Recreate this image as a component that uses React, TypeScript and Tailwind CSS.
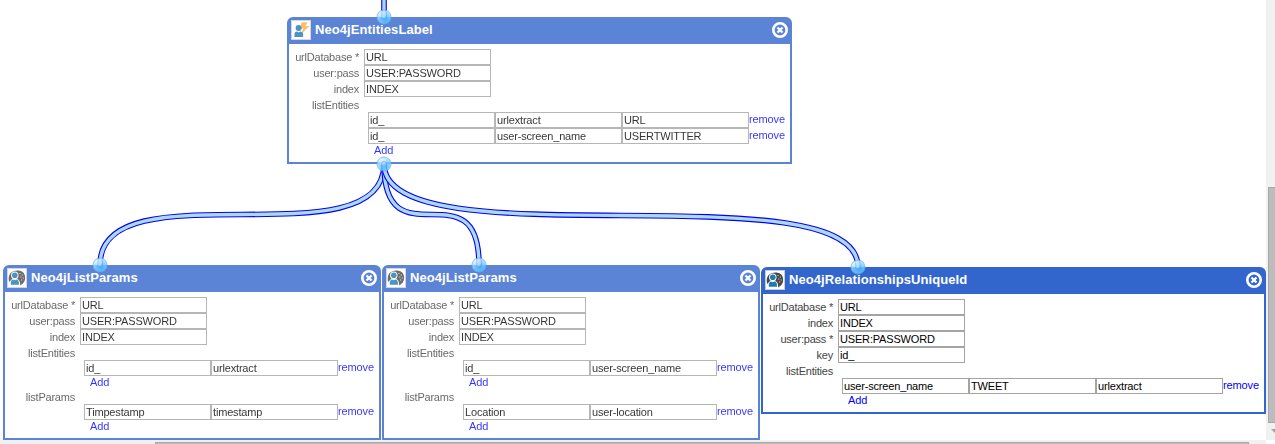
import React from "react";

type Field = { label: string; value: string };
type ListField = { label: string; rows: string[][] };
type NodeProps = {
  title: string;
  place: string;
  active?: boolean;
  icon: "bolt" | "group";
  fields: Field[];
  lists: ListField[];
};

function BoltIcon() {
  return (
    <svg viewBox="0 0 18 18" className="size-[18px]">
      <path d="M9.600 1.200h6l-2.200 3.800h4L8.800 13.500l2.600-6H8z" fill="#fdae45" />
      <circle cx="6.600" cy="7" r="3" fill="#1d7ab5" />
      <path d="M2.500 16v-2.500q0-2.900 2.500-2.900l1.600 1 1.600-1q2.900 0 2.900 2.900V16z" fill="#1d7ab5" />
    </svg>
  );
}

function GroupIcon() {
  return (
    <svg viewBox="0 0 18 18" className="size-[18px]">
      <path
        d="M1 12.500Q0 7.500 2.200 4.500 5 1.300 10.500 1.500q6.700.8 6.700 7.500 0 4.500-5.200 7.500l-1-3z"
        fill="#484848"
      />
      <path
        d="M1.800 16.500q-.6-5.600 2.700-6.600Q3 8.500 3 6.300 3.400 2.700 6.800 2.600q3.500.1 3.800 3.700 0 2.200-1.500 3.600 3.300.9 3 6.600z"
        fill="#fff"
      />
      <circle cx="6.800" cy="6.300" r="2.800" fill="#1d7ab5" />
      <path d="M2.800 15.800q-.4-5.300 2.300-5.400l1.700.9 1.700-.9q2.800.1 2.500 5.400z" fill="#1d7ab5" />
      <path d="M11.500 4.500h1M13.800 6h1M12.300 8h1M14.800 9h1M13.200 11h1" stroke="#eee" strokeWidth="1" />
    </svg>
  );
}

function CloseIcon() {
  return (
    <svg viewBox="0 0 16 16" className="size-4">
      <circle cx="8" cy="8" r="6.700" fill="none" stroke="#fff" strokeWidth="2.600" />
      <path d="M5.500 5.500l5 5M10.500 5.500l-5 5" stroke="#fff" strokeWidth="2.300" />
    </svg>
  );
}

function Box({ value }: { value: string }) {
  return (
    <div className="h-4 w-[127px] shrink-0 border border-[#a4a4a4] bg-white pl-px text-[11px] leading-[15px] tracking-[-0.17px] text-black">
      {value}
    </div>
  );
}

function Label({ text, height }: { text: string; height: string }) {
  return (
    <div
      className={`w-[70px] whitespace-nowrap text-right text-[11px] leading-4 tracking-[-0.22px] text-[#444] ${height}`}
    >
      {text}
    </div>
  );
}

function Node({ title, place, active, icon, fields, lists }: NodeProps) {
  return (
    <section
      className={`absolute flex flex-col rounded-t-[6px] border-2 border-[#3366cc] bg-white ${place} ${active ? "" : "opacity-80"}`}
    >
      <header className="flex h-[25px] shrink-0 items-start bg-[#3366cc] px-[2px]">
        <span className="mt-px flex size-5 items-center justify-center border border-[#ccc] bg-white">
          {icon === "bolt" ? <BoltIcon /> : <GroupIcon />}
        </span>
        <h2 className="ml-1 mt-[2px] flex-1 text-[13px] font-bold leading-[17px] tracking-[0.08px] text-white">
          {title}
        </h2>
        <span className="mt-[3px]">
          <CloseIcon />
        </span>
      </header>
      <div className="flex flex-col pt-[5px]">
        {fields.map((f) => (
          <div key={f.label} className="flex">
            <Label text={f.label} height="h-4" />
            <div className="ml-[5px]">
              <Box value={f.value} />
            </div>
          </div>
        ))}
        {lists.map((l) => (
          <div key={l.label} className="flex flex-col">
            <Label text={l.label} height="h-[15px]" />
            <div className="pl-[79px]">
              {l.rows.map((r, i) => (
                <div key={i} className="flex">
                  {r.map((v, j) => (
                    <Box key={j} value={v} />
                  ))}
                  <a className="text-[11px] leading-[14px] tracking-[-0.12px] text-[#0000ff]">remove</a>
                </div>
              ))}
              <div className="h-[13px] pl-[6px] text-[11px] leading-[13px] tracking-[-0.1px] text-[#0000ff]">Add</div>
            </div>
          </div>
        ))}
      </div>
    </section>
  );
}

const wires = [
  "M384 -60V17",
  "M384 164C384 264 100 165 100 265",
  "M384 164C384 264 479 165 479 265",
  "M384 164C384 264 858 167 858 267",
];

const terminals = [
  [384, 17],
  [384, 164],
  [100, 265],
  [479, 265],
  [858, 267],
];

function Wires() {
  return (
    <svg className="pointer-events-none absolute left-0 top-0" width="1266" height="440">
      <defs>
        <radialGradient id="ball" cx="0.62" cy="0.75" r="0.7">
          <stop offset="0" stopColor="#4dbcff" />
          <stop offset="0.6" stopColor="#7ccbff" />
          <stop offset="1" stopColor="#c8e8ff" />
        </radialGradient>
      </defs>
      {wires.map((d) => (
        <g key={d} fill="none" strokeLinecap="round">
          <path d={d} stroke="#0000ff" strokeWidth="5.600" />
          <path d={d} stroke="#add8e6" strokeWidth="3.400" />
        </g>
      ))}
      {terminals.map(([x, y]) => (
        <g key={`${x}-${y}`} opacity="0.84">
          <circle cx={x} cy={y} r="7" fill="url(#ball)" stroke="#57b4f5" strokeWidth="0.900" />
          <ellipse cx={x - 1.5} cy={y - 2.5} rx="3.800" ry="3" fill="#fff" opacity="0.450" />
        </g>
      ))}
    </svg>
  );
}

export default function App() {
  const common: Field[] = [
    { label: "urlDatabase *", value: "URL" },
    { label: "user:pass", value: "USER:PASSWORD" },
    { label: "index", value: "INDEX" },
  ];
  return (
    <div className="grid h-[444px] w-[1275px] grid-cols-[1266px_9px] grid-rows-[440px_4px] overflow-hidden bg-white font-['Liberation_Sans',sans-serif]">
      <main className="relative overflow-hidden">
        <Node
          title="Neo4jEntitiesLabel"
          place="left-[287px] top-[17px] h-[147px] w-[505px]"
          icon="bolt"
          fields={common}
          lists={[
            {
              label: "listEntities",
              rows: [
                ["id_", "urlextract", "URL"],
                ["id_", "user-screen_name", "USERTWITTER"],
              ],
            },
          ]}
        />
        <Node
          title="Neo4jListParams"
          place="left-[3px] top-[265px] h-[175px] w-[378px]"
          icon="group"
          fields={common}
          lists={[
            { label: "listEntities", rows: [["id_", "urlextract"]] },
            { label: "listParams", rows: [["Timpestamp", "timestamp"]] },
          ]}
        />
        <Node
          title="Neo4jListParams"
          place="left-[382px] top-[265px] h-[175px] w-[378px]"
          icon="group"
          fields={common}
          lists={[
            { label: "listEntities", rows: [["id_", "user-screen_name"]] },
            { label: "listParams", rows: [["Location", "user-location"]] },
          ]}
        />
        <Node
          title="Neo4jRelationshipsUniqueId"
          place="left-[761px] top-[267px] h-[147px] w-[505px]"
          active
          icon="group"
          fields={[
            { label: "urlDatabase *", value: "URL" },
            { label: "index", value: "INDEX" },
            { label: "user:pass *", value: "USER:PASSWORD" },
            { label: "key", value: "id_" },
          ]}
          lists={[{ label: "listEntities", rows: [["user-screen_name", "TWEET", "urlextract"]] }]}
        />
        <Wires />
      </main>
      <div className="flex flex-col overflow-hidden bg-[#f1f1f1] pl-[2px] pt-[187px]">
        <div className="h-[236px] w-[13px] shrink-0 border border-[#a8a8a8] bg-[#bcbcbc]" />
        <svg viewBox="0 0 8 4" className="ml-[3px] mt-[6px] h-1 w-2 shrink-0">
          <path d="M0 0h8L4 4z" fill="#a0a0a0" />
        </svg>
      </div>
      <div className="overflow-hidden bg-[#f1f1f1] pl-[155px] pt-[2px]">
        <div className="h-[13px] w-[1094px] border border-[#a8a8a8] bg-[#bcbcbc]" />
      </div>
      <div className="bg-white" />
    </div>
  );
}
